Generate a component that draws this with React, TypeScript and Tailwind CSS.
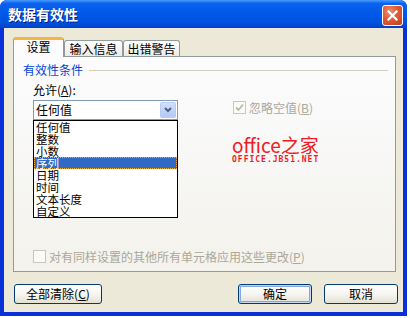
import React from 'react';

const cjk = { fontFamily: '"Noto Sans CJK SC", "Noto Sans", sans-serif' };

const listItems = ['任何值', '整数', '小数', '序列', '日期', '时间', '文本长度', '自定义'];

function CheckBox({ checked }: { checked?: boolean }) {
    return (
        <div className="w-[13px] h-[13px] shrink-0 border border-[#CAC8BB] bg-[#FBFBF8] flex items-center justify-center">
            {checked && (
                <svg width="9" height="9" viewBox="0 0 9 9">
                    <path d="M1 4.5 L3.5 7 L8 1.5" fill="none" stroke="#B9B7A8" strokeWidth="1.8" />
                </svg>
            )}
        </div>
    );
}

function XpButton({ children, w, isDefault }: { children: React.ReactNode; w: string; isDefault?: boolean }) {
    return (
        <div
            className={`${w} h-[20px] rounded-[3px] border border-[#003C74] bg-gradient-to-b from-white via-[#F6F5F0] to-[#E3E0D4] flex items-center justify-center text-[12px] leading-[12px] text-black ${
                isDefault ? 'shadow-[inset_0_0_0_1px_#C2D6F4,inset_0_0_0_2px_#86A8E0]' : ''
            }`}
        >
            {children}
        </div>
    );
}

export default function App() {
    return (
        <div className="w-[410px] h-[318px] bg-white overflow-hidden" style={cjk}>
            {/* 窗口 */}
            <div className="w-[407px] h-[316px] rounded-t-[7px] bg-[#0831D9] flex flex-col overflow-hidden">
                {/* 标题栏 */}
                <div className="h-[28px] shrink-0 flex items-start justify-between pl-[8px] pr-[4px] bg-[linear-gradient(to_bottom,#4B9CFF_0%,#0A62EE_12%,#0058E8_50%,#0052E0_80%,#0041C8_100%)]">
                    <span className="mt-[6px] text-[14px] leading-[16px] font-bold text-white [text-shadow:1px_1px_0_#0A1E80]">
                        数据有效性
                    </span>
                    <div className="mt-[5px] w-[21px] h-[21px] rounded-[3px] border border-white bg-[radial-gradient(circle_at_35%_30%,#F0906E_0%,#E05A34_45%,#C2401C_100%)] flex items-center justify-center">
                        <svg width="11" height="11" viewBox="0 0 11 11">
                            <path d="M1.5 1.5 L9.5 9.5 M9.5 1.5 L1.5 9.5" stroke="white" strokeWidth="2.2" strokeLinecap="square" />
                        </svg>
                    </div>
                </div>

                {/* 主体 */}
                <div className="flex-1 mx-[4px] mb-[4px] bg-[#ECE9D8] flex flex-col pt-[9px] pl-[9px]">
                    {/* 选项卡 */}
                    <div className="flex items-end h-[19px] text-[12px] leading-[12px] text-black">
                        <div className="relative z-10 -mb-px h-[20px] w-[51px] rounded-t-[3px] border-x border-[#919B9C] border-t-[3px] border-t-[#F5B53F] bg-[#FCFCFE] flex items-start justify-center pt-[1px]">
                            设置
                        </div>
                        <div className="h-[16px] w-[59px] rounded-t-[3px] border border-b-0 border-[#919B9C] bg-gradient-to-b from-white to-[#ECEBE6] flex items-center justify-center">
                            输入信息
                        </div>
                        <div className="h-[16px] w-[57px] rounded-t-[3px] border border-b-0 border-[#919B9C] bg-gradient-to-b from-white to-[#ECEBE6] flex items-center justify-center">
                            出错警告
                        </div>
                    </div>

                    {/* 选项卡页 */}
                    <div className="w-[383px] h-[216px] border border-[#919B9C] bg-gradient-to-b from-[#FCFCFE] to-[#F3F2EC] flex flex-col text-[12px]">
                        <div className="mt-[6px] h-[14px] pl-[9px] pr-[7px] flex items-center gap-[6px]">
                            <span className="leading-[14px] text-[#0046D5]">有效性条件</span>
                            <div className="flex-1 h-px bg-[#D0D0BF]" />
                        </div>

                        <div className="mt-[6px] pl-[19px] h-[14px] leading-[14px] text-black">
                            允许(<span className="underline">A</span>):
                        </div>

                        <div className="mt-[3px] pl-[19px] flex items-start">
                            {/* 下拉框 */}
                            <div className="w-[145px] flex flex-col">
                                <div className="h-[20px] border border-[#7F9DB9] bg-white flex items-center justify-between pl-[2px] pr-px">
                                    <span className="leading-[12px] text-black">任何值</span>
                                    <div className="w-[16px] h-[16px] rounded-[2px] border border-[#B9CBF3] bg-gradient-to-b from-[#D2DEFB] to-[#B5C8F5] flex items-center justify-center">
                                        <svg width="8" height="6" viewBox="0 0 8 6">
                                            <path d="M1 1 L4 4 L7 1" fill="none" stroke="#4D6185" strokeWidth="2" />
                                        </svg>
                                    </div>
                                </div>
                                <div className="h-[98px] border border-black bg-white flex flex-col text-[11.5px]">
                                    {listItems.map(item =>
                                        item === '序列' ? (
                                            <div
                                                key={item}
                                                className="h-[12px] leading-[10px] bg-[#316AC5] text-white border border-dotted border-[#F2A93B] pl-px"
                                            >
                                                {item}
                                            </div>
                                        ) : (
                                            <div key={item} className="h-[12px] leading-[12px] text-black pl-[2px]">
                                                {item}
                                            </div>
                                        )
                                    )}
                                </div>
                            </div>

                            {/* 右侧 */}
                            <div className="ml-[55px] flex flex-col">
                                <div className="mt-px flex items-center gap-[3px]">
                                    <CheckBox checked />
                                    <span className="leading-[13px] text-[#ACA899]">
                                        忽略空值(<span className="underline">B</span>)
                                    </span>
                                </div>
                                <div className="mt-[21px] -ml-px flex flex-col text-[#EE1C25]">
                                    <span className="text-[19px] leading-[19px]">office之家</span>
                                    <span className="mt-[2px] text-[8px] leading-[8px] font-bold tracking-[1px] [font-family:'DejaVu_Sans_Mono',monospace]">
                                        OFFICE.JB51.NET
                                    </span>
                                </div>
                            </div>
                        </div>

                        <div className="mt-[32px] pl-[19px] flex items-center gap-[3px]">
                            <CheckBox />
                            <span className="leading-[13px] text-[#ACA899]">
                                对有同样设置的其他所有单元格应用这些更改(<span className="underline">P</span>)
                            </span>
                        </div>
                    </div>

                    {/* 按钮 */}
                    <div className="mt-[12px] pl-px pr-[5px] flex items-center">
                        <XpButton w="w-[88px]">
                            全部清除(<span className="underline">C</span>)
                        </XpButton>
                        <div className="ml-auto flex gap-[12px]">
                            <XpButton w="w-[74px]" isDefault>
                                确定
                            </XpButton>
                            <XpButton w="w-[74px]">取消</XpButton>
                        </div>
                    </div>
                </div>
            </div>
        </div>
    );
}
